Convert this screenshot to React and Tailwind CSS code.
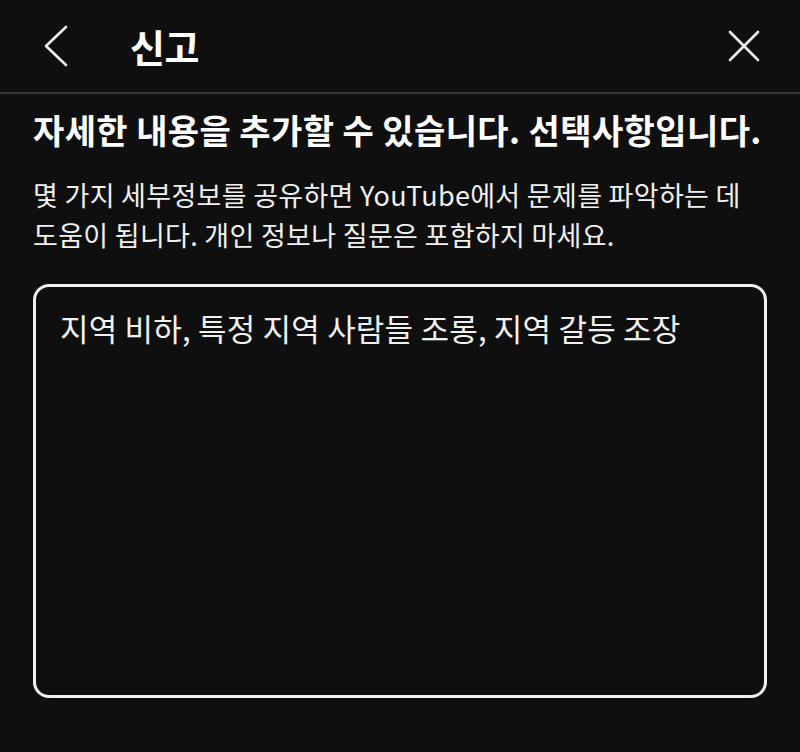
export default function App() {
  return (
    <div
      className="w-[800px] h-[752px] bg-[#0f0f0f] text-white overflow-hidden flex flex-col"
      style={{ fontFamily: '"Noto Sans CJK KR", "Noto Sans", sans-serif' }}
    >
      <header className="h-[94px] flex items-center border-b-2 border-[#3a3a3a] shrink-0">
        <button className="w-[130px] h-full flex items-center pl-[42px]">
          <svg width="28" height="42" viewBox="0 0 28 42" fill="none">
            <path d="M24 2 L4 21 L24 40" stroke="#f1f1f1" strokeWidth="2.6" strokeLinecap="round" strokeLinejoin="round" />
          </svg>
        </button>
        <h1 className="text-[38px] font-bold leading-none tracking-[-0.5px]">신고</h1>
        <button className="ml-auto mr-[40px] flex items-center">
          <svg width="32" height="32" viewBox="0 0 32 32" fill="none">
            <path d="M2 2 L30 30 M30 2 L2 30" stroke="#f1f1f1" strokeWidth="2.6" strokeLinecap="round" />
          </svg>
        </button>
      </header>

      <div className="flex flex-col px-[33px] pt-[14px]">
        <h2 className="text-[34px] font-bold leading-[44px] tracking-[0.4px] whitespace-nowrap">
          자세한 내용을 추가할 수 있습니다. 선택사항입니다.
        </h2>
        <p className="mt-[23px] text-[27px] leading-[40px] text-[#f1f1f1] tracking-[0.3px] whitespace-nowrap">
          몇 가지 세부정보를 공유하면 YouTube에서 문제를 파악하는 데
          <br />
          도움이 됩니다. 개인 정보나 질문은 포함하지 마세요.
        </p>
        <div className="mt-[29px] h-[414px] border-[3px] border-[#f1f1f1] rounded-[16px] px-[24px] pt-[21px]">
          <p className="text-[31px] leading-[40px] tracking-[0.2px] text-[#f1f1f1]">
            지역 비하, 특정 지역 사람들 조롱, 지역 갈등 조장
          </p>
        </div>
      </div>
    </div>
  );
}
